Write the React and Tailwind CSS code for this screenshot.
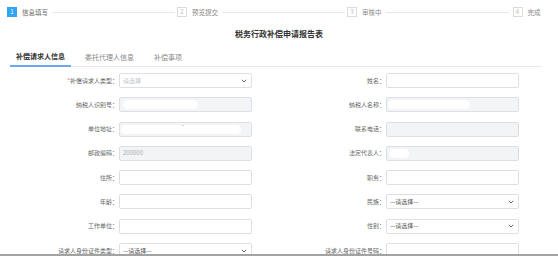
const font = { fontFamily: '"Noto Sans CJK SC", "Noto Sans", sans-serif' };

const steps = [
  { n: 1, label: '信息填写', active: true },
  { n: 2, label: '预览提交' },
  { n: 3, label: '审核中' },
  { n: 4, label: '完成' },
];

const rows = [
  [
    { label: '补偿请求人类型', required: true, type: 'select', text: '请选择', placeholder: true },
    { label: '姓名' },
  ],
  [
    { label: '纳税人识别号', disabled: true, blot: 'w-[75px] ml-[3px]' },
    { label: '纳税人名称', disabled: true, blot: 'w-[82px] ml-[1px]' },
  ],
  [
    { label: '单位地址', disabled: true, blot: 'w-[120px] ml-[1px]', dot: true },
    { label: '联系电话', disabled: true },
  ],
  [
    { label: '邮政编码', disabled: true, text: '200000' },
    { label: '法定代表人', disabled: true, blot: 'w-[20px] ml-[2px]' },
  ],
  [{ label: '住所' }, { label: '职务' }],
  [{ label: '年龄' }, { label: '民族', type: 'select', text: '—请选择—' }],
  [{ label: '工作单位' }, { label: '性别', type: 'select', text: '—请选择—' }],
  [
    { label: '请求人身份证件类型', type: 'select', text: '—请选择—' },
    { label: '请求人身份证件号码' },
  ],
];

function Chevron() {
  return (
    <svg width="6" height="4" viewBox="0 0 6 4" className="ml-auto mr-[4px]">
      <path d="M0.8 0.8 L3 3 L5.2 0.8" fill="none" stroke="#555" strokeWidth="0.9" />
    </svg>
  );
}

function Field({ f }) {
  return (
    <div
      className={`relative flex h-[15px] w-[133px] items-center rounded-[2px] border border-[#dcdfe6] ml-[1px] ${
        f.disabled ? 'bg-[#f3f4f6]' : 'bg-white'
      }`}
    >
      {f.blot && <span className={`h-[9px] rounded-full bg-white ${f.blot}`} />}
      {f.dot && <span className="absolute left-[62px] top-[2px] h-[1px] w-[2px] bg-[#cfcfcf]" />}
      {f.text && (
        <span
          className={`pl-[3px] text-[6px] leading-none ${
            f.placeholder ? 'text-[#c0c4cc]' : f.disabled ? 'text-[#a8abb2]' : 'text-[#555]'
          }`}
        >
          {f.text}
        </span>
      )}
      {f.type === 'select' && <Chevron />}
    </div>
  );
}

export default function App() {
  return (
    <div className="h-[258px] w-[558px] overflow-hidden bg-white" style={font}>
      <div className="h-[254px] overflow-hidden">
        {/* steps */}
        <div className="flex h-[24px] items-center pl-[7px]">
          {steps.map((s, i) => (
            <div key={s.n} className="flex items-center">
              <span
                className={`flex h-[10px] w-[10px] items-center justify-center text-[6px] leading-none ${
                  s.active ? 'bg-[#2ea6f2] text-white' : 'border border-[#dcdcdc] text-[#bbb]'
                }`}
              >
                {s.n}
              </span>
              <span className={`ml-[5px] text-[6.5px] leading-none ${s.active ? 'text-[#666]' : 'text-[#888]'}`}>
                {s.label}
              </span>
              {i < steps.length - 1 && (
                <span className={`h-px w-[123px] bg-[#e8e8e8] ${i === 2 ? 'mx-[4px]' : 'ml-[4px] mr-[2px]'}`} />
              )}
            </div>
          ))}
        </div>

        {/* title */}
        <h1 className="mt-[5px] text-center text-[8px] font-bold leading-[10px] text-[#333]">
          税务行政补偿申请报告表
        </h1>

        {/* tabs */}
        <div className="mx-[10px] mt-[9px] flex w-[531px] gap-[8px] border-b border-[#e6e8eb]">
          {['补偿请求人信息', '委托代理人信息', '补偿事项'].map((t, i) => (
            <div
              key={t}
              className={`-mb-px flex h-[19px] items-center px-[6px] text-[7px] leading-none ${
                i === 0 ? 'border-b-2 border-[#6ea6ee] font-bold text-[#333]' : 'text-[#888]'
              }`}
            >
              {t}
            </div>
          ))}
        </div>

        {/* form */}
        <div className="mt-[6px] flex flex-col gap-[9.3px]">
          {rows.map((r, i) => (
            <div key={i} className="flex items-center">
              <label className="w-[118px] text-right text-[6px] leading-none text-[#666]">
                {r[0].required && <span className="text-[#f56c6c]">*</span>}
                {r[0].label}：
              </label>
              <Field f={r[0]} />
              <label className="w-[133px] text-right text-[6px] leading-none text-[#666]">{r[1].label}：</label>
              <Field f={r[1]} />
            </div>
          ))}
        </div>
      </div>
      <div className="h-[2px] bg-[#a3a3a3]" />
    </div>
  );
}
